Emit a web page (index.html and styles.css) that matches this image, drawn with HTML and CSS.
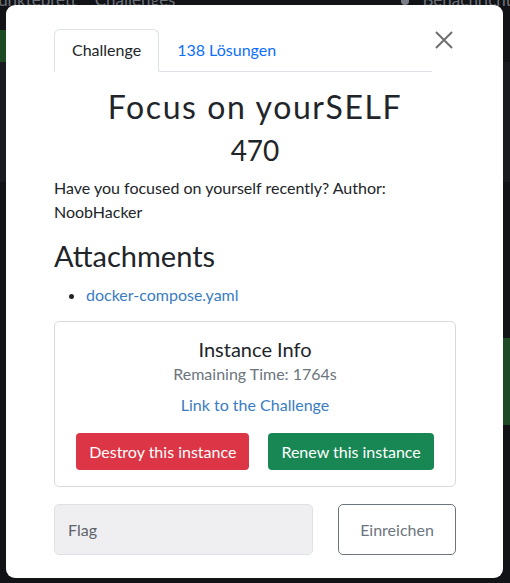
FILE: index.html
```html
<!DOCTYPE html>
<html lang="de">
<head>
  <meta charset="UTF-8" />
  <meta name="viewport" content="width=device-width, initial-scale=1" />
  <title>Focus on yourSELF</title>
  <link rel="stylesheet" href="styles.css">
</head>
<body>
  <div class="page">
    <nav class="topbar">
      <span class="brand">Punktebrett</span>
      <span>Challenges</span>
      <span class="bell"></span>
      <span class="notify">Benachrichtigungen</span>
    </nav>
    <div class="band band-green-left"></div>
    <div class="band band-light"></div>
    <div class="band band-green-right"></div>
  </div>

  <div class="modal">
    <div class="modal-head">
      <ul class="tabs">
        <li class="tab active">Challenge</li>
        <li class="tab"><a href="#">138 Lösungen</a></li>
      </ul>
      <button class="close" aria-label="Close">
        <svg width="20" height="20" viewBox="0 0 20 20">
          <path d="M2 2 L18 18 M18 2 L2 18" stroke="#6f6f6f" stroke-width="2" fill="none" />
        </svg>
      </button>
    </div>

    <h2 class="title">Focus on yourSELF</h2>
    <h3 class="points">470</h3>
    <p class="desc">Have you focused on yourself recently? Author: NoobHacker</p>

    <h3 class="section">Attachments</h3>
    <ul class="files">
      <li><a href="#">docker-compose.yaml</a></li>
    </ul>

    <div class="instance">
      <h5>Instance Info</h5>
      <div class="remaining">Remaining Time: 1764s</div>
      <a href="#" class="challenge-link">Link to the Challenge</a>
      <div class="actions">
        <button class="btn btn-red">Destroy this instance</button>
        <button class="btn btn-green">Renew this instance</button>
      </div>
    </div>

    <form class="flag-form">
      <input type="text" placeholder="Flag" />
      <button type="submit" class="btn-outline">Einreichen</button>
    </form>
  </div>
</body>
</html>
```

FILE: styles.css
```css
body {
  margin: 0;
  background-color: #121317;
  font-family: Lato, "Noto Sans", sans-serif;
  color: #212529;
  height: 583px;
  overflow: hidden;
}

.page {
  height: 583px;
  display: flex;
  flex-direction: column;
}

.topbar {
  display: flex;
  gap: 18px;
  height: 20px;
  margin-top: -10px;
  color: #6b7079;
  font-size: 17px;
  line-height: 20px;
  white-space: nowrap;
  overflow: hidden;
}

.brand {
  margin-left: -12px;
}

.bell {
  flex-shrink: 0;
  width: 8px;
  height: 14px;
  margin-top: 1px;
  margin-left: 208px;
  border-radius: 4px;
  background: #7a7e86;
}

.notify {
  margin-left: -5px;
}

.band {
  height: 0;
}

.band-green-left {
  height: 32px;
  margin-top: 20px;
  background: linear-gradient(to right, #1d4a22 20px, #121317 20px);
}

.band-light {
  height: 120px;
  background: #1a1b21;
}

.band-green-right {
  height: 87px;
  margin-top: 156px;
  background: linear-gradient(to left, #1d4a22 20px, #121317 20px);
}

/* modal */

.modal {
  position: absolute;
  left: 6px;
  top: 5px;
  width: 497px;
  height: 573px;
  box-sizing: border-box;
  padding: 24px 47px 0 48px;
  background: #fff;
  border-radius: 9px;
}

.modal-head {
  display: flex;
}

.tabs {
  flex: 1;
  display: flex;
  margin: 0;
  padding: 0;
  list-style: none;
  border-bottom: 1px solid #dee2e6;
}

.tab {
  padding: 9px 17px 10px 17px;
  font-size: 16px;
  line-height: 22px;
  border: 1px solid transparent;
  border-top-left-radius: 6px;
  border-top-right-radius: 6px;
  margin-bottom: -1px;
}

.tab.active {
  border-color: #dee2e6 #dee2e6 #fff;
  background: #fff;
}

.tab a {
  color: #0d6efd;
  text-decoration: none;
}

.close {
  width: 24px;
  height: 24px;
  margin-top: 0;
  padding: 0;
  border: none;
  background: none;
}

.title {
  margin: 15px 0 0;
  text-align: center;
  font-size: 32px;
  font-weight: 400;
  letter-spacing: 1.6px;
  line-height: 40px;
}

.points {
  margin: 6px 0 0;
  text-align: center;
  font-size: 28px;
  font-weight: 400;
  line-height: 34px;
}

.desc {
  margin: 9px 0 0;
  font-size: 16px;
  line-height: 24px;
}

.section {
  margin: 15px 0 0;
  font-size: 29px;
  font-weight: 400;
  line-height: 34px;
}

.files {
  margin: 10px 0 0;
  padding-left: 32px;
  font-size: 16px;
  line-height: 24px;
}

.files a,
.challenge-link {
  color: #3a7cc2;
  text-decoration: none;
}

.instance {
  margin-top: 14px;
  border: 1px solid #d9d9d9;
  border-radius: 5px;
  padding: 15px 21px 16px;
  text-align: center;
}

.instance h5 {
  margin: 0;
  font-size: 20px;
  font-weight: 400;
  line-height: 24px;
}

.remaining {
  margin-top: 2px;
  color: #6c757d;
  font-size: 16px;
  line-height: 22px;
}

.challenge-link {
  display: block;
  margin-top: 8px;
  font-size: 16px;
  line-height: 24px;
}

.actions {
  display: flex;
  justify-content: center;
  gap: 19px;
  margin-top: 16px;
}

.btn {
  border: none;
  border-radius: 4px;
  padding: 0 13px;
  height: 37px;
  font-family: inherit;
  font-size: 16px;
  color: #fff;
}

.btn-red {
  background: #dc3545;
}

.btn-green {
  background: #198754;
}

.flag-form {
  display: flex;
  gap: 25px;
  margin-top: 17px;
}

.flag-form input {
  flex: 1;
  height: 51px;
  box-sizing: border-box;
  padding: 0 13px;
  border: 1px solid #dee2e6;
  border-radius: 5px;
  background: #efeff1;
  font-family: inherit;
  font-size: 16px;
}

.flag-form input::placeholder {
  color: #5e6369;
}

.btn-outline {
  width: 118px;
  height: 51px;
  border: 1px solid #6c757d;
  border-radius: 5px;
  background: #fff;
  color: #6c757d;
  font-family: inherit;
  font-size: 16px;
}
```
